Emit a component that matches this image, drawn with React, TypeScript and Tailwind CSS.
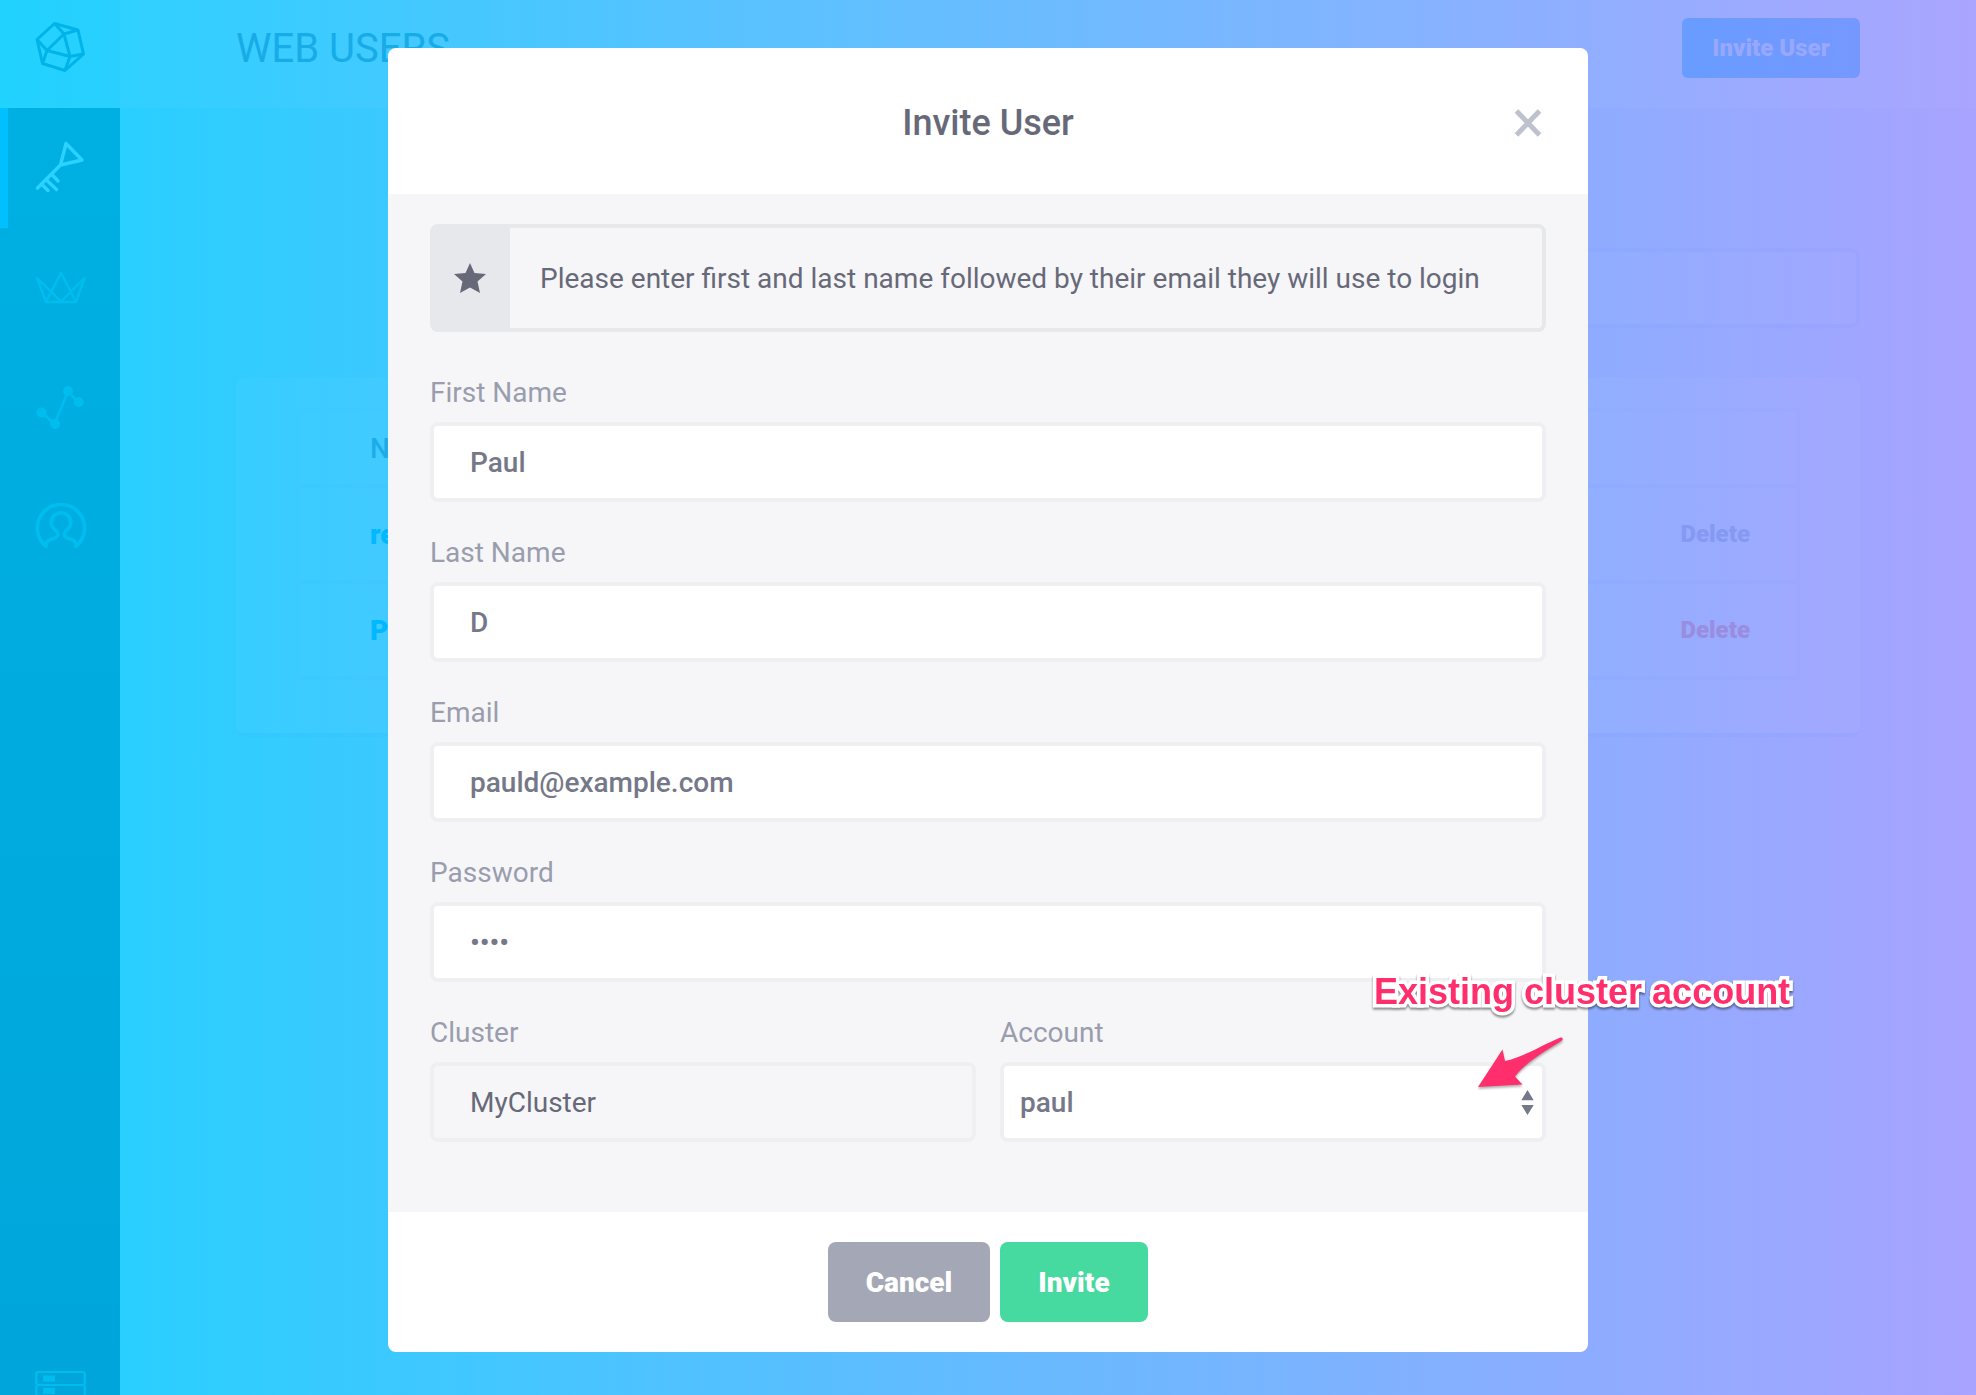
import React from "react";

function LogoIcon() {
  return (
    <svg className="h-[52px] w-[52px]" viewBox="0 0 52 52" fill="none" stroke="#00b4ea" strokeWidth="3" strokeLinejoin="round">
      <path d="M19.500 2.500L43 9L48.500 33L30 49.500L7.500 42.500L2 18.500Z" />
      <path d="M19.500 2.500L29 13L43 9M29 13L35 35.500L48.500 33M35 35.500L30 49.500M35 35.500L12 29.500L29 13M12 29.500L2 18.500M12 29.500L7.500 42.500" />
    </svg>
  );
}

function KeyIcon() {
  return (
    <svg className="h-[52px] w-[52px]" viewBox="0 0 52 52" fill="none" stroke="#2bd2ff" strokeWidth="3.400" strokeLinejoin="round" strokeLinecap="round">
      <path d="M32 2.500L48 19L26.500 24ZM26.500 24L3.500 47M18 33.500L24 40M12.500 39L22.500 48.500M8 43.500L14 49.500" />
    </svg>
  );
}

function CrownIcon() {
  return (
    <svg className="h-[52px] w-[52px]" viewBox="0 0 52 52" fill="none" stroke="#00bdf0" strokeWidth="2.400" strokeLinejoin="round">
      <path d="M11 41H41L49.500 17L26 40.500L2 17ZM11 41L26 12L41 41" />
    </svg>
  );
}

function GraphIcon() {
  return (
    <svg className="h-[52px] w-[52px]" viewBox="0 0 52 52" fill="#00bdf0" stroke="#00bdf0" strokeWidth="2.600">
      <path fill="none" d="M7.500 31L20.500 43L34 10.500L44.500 21.500" />
      <g stroke="none">
        <circle cx="7.500" cy="31.500" r="5" />
        <circle cx="21" cy="43" r="5" />
        <circle cx="34" cy="10" r="5" />
        <circle cx="44.700" cy="21" r="5" />
      </g>
    </svg>
  );
}

function UserIcon() {
  return (
    <svg className="h-[52px] w-[52px]" viewBox="0 0 52 52" fill="none" stroke="#00bdf0" strokeWidth="3.600" strokeLinejoin="round" strokeLinecap="round">
      <path d="M11.300 45.500A23.600 23.600 0 1 1 40.700 45.500C41 38.500 38 39 34 37.800C29.500 36.500 28 34 30.500 30C34.500 27.500 35.800 25 35.800 21.500A9.800 9.800 0 0 0 16.200 21.500C16.200 25 17.500 27.500 21.500 30C24 34 22.500 36.500 18 37.800C14 39 11 38.500 11.300 45.500Z" />
    </svg>
  );
}

function ServerIcon() {
  return (
    <svg className="h-[52px] w-[52px]" viewBox="0 0 52 52" fill="none" stroke="#00bdf0" strokeWidth="2.200">
      <rect x="1.300" y="3" width="48.500" height="13" rx="2" />
      <rect x="1.300" y="16" width="48.500" height="12.500" rx="2" />
      <rect x="1.300" y="28.500" width="48.500" height="12.500" rx="2" />
      <path fill="#00bdf0" stroke="none" d="M8 6.500h12v6H8zM8 19h12v6H8zM8 31.500h12v6H8z" />
    </svg>
  );
}

function Sidebar() {
  return (
    <nav className="flex w-[120px] shrink-0 flex-col">
      <div className="flex h-[108px] items-start justify-center pt-[21px] pl-0.5">
        <LogoIcon />
      </div>
      <div className="flex grow flex-col bg-linear-to-b from-[#00b0e3] to-[#00a6db]">
        <div className="flex h-[120px] items-center justify-center border-l-8 border-[#00c0ff] pr-2 pb-0.5">
          <KeyIcon />
        </div>
        <div className="flex h-[120px] items-center justify-center pb-0.5 pl-px"><CrownIcon /></div>
        <div className="flex h-[120px] items-center justify-center pb-0.5"><GraphIcon /></div>
        <div className="flex h-[120px] items-center justify-center pb-0.5 pl-px"><UserIcon /></div>
        <div className="mt-auto flex h-[26px] justify-center overflow-hidden pl-px"><ServerIcon /></div>
      </div>
    </nav>
  );
}

function UserRow({ name, tone }: { name: string; tone: string }) {
  return (
    <div className="flex h-24 items-center justify-between border-b-4 border-[#3282ff]/3 pr-[46px] pl-[70px]">
      <span className="w-14 overflow-hidden pt-0.5 text-[28px] font-black text-[#00b8ff]">{name}</span>
      <span className={"text-2xl font-black " + tone}>Delete</span>
    </div>
  );
}

function Page() {
  return (
    <main className="flex grow flex-col">
      <header className="flex h-[108px] items-start justify-between bg-white/3 pr-[116px] pl-[116px]">
        <h1 className="pt-[19px] text-[40px] leading-[60px] text-[#17abe8]">WEB USERS</h1>
        <button className="mt-[18px] h-[60px] w-[178px] rounded-md bg-linear-to-r from-[#689cff] to-[#7598ff] text-2xl font-black text-[#98a8ff]">
          Invite User
        </button>
      </header>
      <div className="flex flex-col px-[116px] pt-[140px]">
        <div className="h-20 w-[600px] self-end rounded-lg border-4 border-[#3c78ff]/4 bg-white/2 bg-clip-padding" />
        <section className="mt-[50px] h-[359px] rounded-lg border-b-4 border-[#3282ff]/4 bg-white/3 bg-clip-padding px-[60px] pt-[30px]">
          <div className="border-x-4 border-t-4 border-[#3282ff]/2">
            <div className="flex h-[76px] items-center border-b-4 border-[#3282ff]/3 pl-[70px] text-[28px] font-medium text-[#1eace8]">
              <span className="w-14 overflow-hidden pt-0.5">Name</span>
            </div>
            <UserRow name="reader" tone="text-[#8599f3]" />
            <UserRow name="Paul" tone="text-[#998ddf]" />
          </div>
        </section>
      </div>
    </main>
  );
}

function Field({ label, value, type = "text" }: { label: string; value: string; type?: string }) {
  return (
    <label className="flex h-40 flex-col">
      <span className="h-[50px] text-[28px] leading-[41px] text-[#999dad]">{label}</span>
      <input
        readOnly
        type={type}
        value={value}
        className="h-20 w-full rounded-lg border-4 border-[#eeeff2] bg-white px-9 text-[28px] font-medium text-[#757888] outline-none"
      />
    </label>
  );
}

function InviteModal() {
  return (
    <div className="absolute top-12 left-[388px] flex h-[1304px] w-[1200px] flex-col overflow-hidden rounded-lg bg-white">
      <div className="grid h-[146px] shrink-0 grid-cols-[1fr_auto_1fr] items-center px-[46px] pt-[3px]">
        <h2 className="col-start-2 text-[36px] font-medium text-[#676978]">Invite User</h2>
        <svg className="h-[32px] w-[28px] justify-self-end" viewBox="0 0 28 32" stroke="#bec2cc" strokeWidth="5">
          <path d="M2.500 4L25.500 28M25.500 4L2.500 28" />
        </svg>
      </div>
      <div className="flex grow flex-col bg-[#f6f6f8] px-[42px] pt-[30px]">
        <div className="flex h-[108px] shrink-0 overflow-hidden rounded-lg border-4 border-[#e7e8eb]">
          <div className="flex w-[76px] items-center justify-center bg-[#e7e8eb] pr-1">
            <svg className="h-[30px] w-[32px]" viewBox="0 0 32 30" fill="#676978">
              <path d="M16 0L20.500 10L32 11L23.500 18.500L26 30L16 24.500L6 30L8.500 18.500L0 11L11.500 10Z" />
            </svg>
          </div>
          <p className="flex items-center pt-0.5 pl-[30px] text-[28px] text-[#676978]">
            Please enter first and last name followed by their email they will use to login
          </p>
        </div>
        <div className="mt-10 flex flex-col">
          <Field label="First Name" value="Paul" />
          <Field label="Last Name" value="D" />
          <Field label="Email" value="pauld@example.com" />
          <Field label="Password" value="pass" type="password" />
          <div className="grid grid-cols-2 gap-6">
            <div className="flex flex-col">
              <span className="h-[50px] text-[28px] leading-[41px] text-[#999dad]">Cluster</span>
              <div className="flex h-20 items-center rounded-lg border-4 border-[#eeeff2] px-9 pt-0.5 text-[28px] text-[#676978]">MyCluster</div>
            </div>
            <div className="flex flex-col">
              <span className="h-[50px] text-[28px] leading-[41px] text-[#999dad]">Account</span>
              <div className="flex h-20 items-center justify-between rounded-lg border-4 border-[#eeeff2] bg-white pr-2 pl-4 text-[28px] font-medium text-[#757888]">
                <span className="pt-0.5">paul</span>
                <svg className="h-[25px] w-[13px]" viewBox="0 0 13 25" fill="#757888">
                  <path d="M6.500 0L12.700 10.300H.3ZM6.500 25L12.700 15H.3Z" />
                </svg>
              </div>
            </div>
          </div>
        </div>
      </div>
      <div className="flex h-[140px] shrink-0 items-center justify-center gap-[10px] text-[28px] font-black text-white">
        <button className="h-20 w-[162px] rounded-lg bg-[#a4a8b6] pt-0.5">Cancel</button>
        <button className="h-20 w-[148px] rounded-lg bg-[#46d9a0] pt-0.5">Invite</button>
      </div>
    </div>
  );
}

function Annotation() {
  return (
    <div className="absolute top-[968px] left-[1374px] text-[#ff2e6c]">
      <p className="font-['Liberation_Sans'] text-[36px] leading-[48px] font-bold whitespace-nowrap [-webkit-text-stroke:7px_white] [paint-order:stroke_fill] drop-shadow-[0_2px_1px_rgba(0,0,0,0.45)]">
        Existing cluster account
      </p>
      <svg className="absolute top-[66px] left-[100px] h-[60px] w-[100px] overflow-visible drop-shadow-[0_2px_1px_rgba(0,0,0,0.3)]" viewBox="0 0 100 60" fill="currentColor">
        <path d="M4 53L28.500 15.500L31 27C50 23 70 10 86.500 3.500C88.500 3 89.500 5 88 6.500C70 18 52 28 41 42.500L48.500 50.500Z" />
      </svg>
    </div>
  );
}

export default function App() {
  return (
    <div className="relative flex h-[1395px] w-[1976px] overflow-hidden bg-linear-to-r/srgb from-[#21d2ff] to-[#a8a3ff] font-[Roboto,sans-serif]">
      <Sidebar />
      <Page />
      <InviteModal />
      <Annotation />
    </div>
  );
}
